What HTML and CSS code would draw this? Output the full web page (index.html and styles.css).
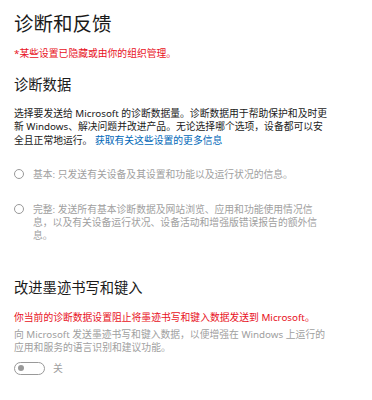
FILE: index.html
```html
<!DOCTYPE html>
<html lang="zh-CN">
<head>
<meta charset="utf-8">
<link rel="stylesheet" href="styles.css">
</head>
<body>
<main class="page">
  <h1 class="title">诊断和反馈</h1>
  <p class="managed">*某些设置已隐藏或由你的组织管理。</p>

  <h2 class="section-title first">诊断数据</h2>
  <p class="desc">选择要发送给 Microsoft 的诊断数据量。诊断数据用于帮助保护和及时更新 Windows、解决问题并改进产品。无论选择哪个选项，设备都可以安全且正常地运行。 <a class="link" href="#">获取有关这些设置的更多信息</a></p>

  <label class="radio r1">
    <span class="circle"></span>
    <span class="radio-text">基本: 只发送有关设备及其设置和功能以及运行状况的信息。</span>
  </label>
  <label class="radio r2">
    <span class="circle"></span>
    <span class="radio-text">完整: 发送所有基本诊断数据及网站浏览、应用和功能使用情况信息，以及有关设备运行状况、设备活动和增强版错误报告的额外信息。</span>
  </label>

  <h2 class="section-title second">改进墨迹书写和键入</h2>
  <p class="warn">你当前的诊断数据设置阻止将墨迹书写和键入数据发送到 Microsoft。</p>
  <p class="disabled-text">向 Microsoft 发送墨迹书写和键入数据，以便增强在 Windows 上运行的应用和服务的语言识别和建议功能。</p>

  <div class="toggle-row">
    <span class="toggle"><span class="knob"></span></span>
    <span class="toggle-label">关</span>
  </div>
</main>
</body>
</html>
```

FILE: styles.css
```css
html, body {
  margin: 0;
  padding: 0;
  background: #ffffff;
}

body {
  font-family: "Noto Sans", "Noto Sans CJK SC", sans-serif;
  color: #000;
}

.page {
  padding: 12px 0 0 14px;
  width: 317px;
}

.title {
  margin: 0;
  font-size: 19.5px;
  line-height: 24px;
  font-weight: 400;
  color: #1a1a1a;
}

.managed {
  margin: 10.5px 0 0;
  font-size: 9.8px;
  line-height: 13px;
  color: #e81123;
}

.section-title {
  margin: 0;
  font-size: 14.3px;
  line-height: 20px;
  font-weight: 400;
  color: #1a1a1a;
}

.section-title.first {
  margin-top: 15.5px;
}

.section-title.second {
  margin-top: 35.5px;
}

.desc {
  margin: 12px 0 0;
  font-size: 9.8px;
  line-height: 13.25px;
  color: #1a1a1a;
}

.link {
  color: #0067b8;
  text-decoration: none;
}

.radio {
  display: flex;
  align-items: flex-start;
  gap: 9px;
}

.radio.r1 {
  margin-top: 21.5px;
}

.radio.r2 {
  margin-top: 22px;
}

.circle {
  flex: none;
  width: 8px;
  height: 8px;
  margin-top: 1px;
  border: 1.5px solid #999999;
  border-radius: 50%;
}

.radio-text {
  width: 286px;
  font-size: 9.8px;
  line-height: 13px;
  color: #a0a0a0;
}

.warn {
  margin: 13.5px 0 0;
  font-size: 9.8px;
  line-height: 13px;
  color: #e81123;
}

.disabled-text {
  width: 312px;
  margin: 4px 0 0;
  font-size: 9.8px;
  line-height: 13px;
  color: #a0a0a0;
}

.toggle-row {
  margin-top: 7.5px;
  display: flex;
  align-items: center;
  gap: 8px;
}

.toggle {
  box-sizing: border-box;
  width: 31px;
  height: 13px;
  border: 1.5px solid #999999;
  border-radius: 7px;
  display: flex;
  align-items: center;
  padding-left: 3px;
}

.knob {
  width: 6px;
  height: 6px;
  border-radius: 50%;
  background: #999999;
}

.toggle-label {
  font-size: 9.8px;
  line-height: 13px;
  color: #a0a0a0;
}
```
